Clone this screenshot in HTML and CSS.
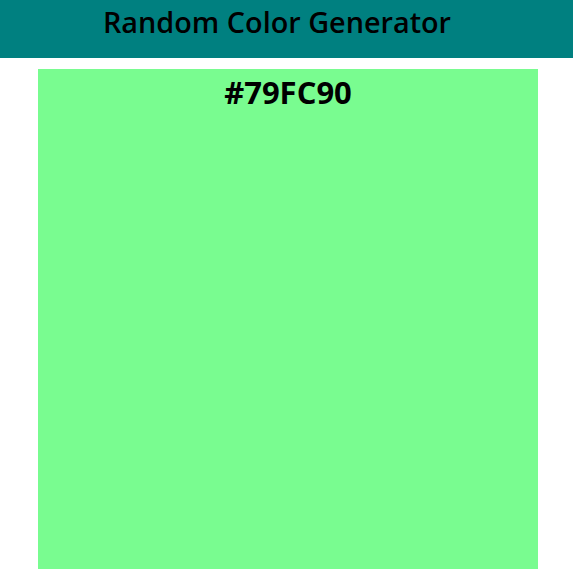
FILE: index.html
```html
<!DOCTYPE html>
<html>
<head>
<meta charset="utf-8">
<link rel="stylesheet" href="styles.css">
</head>
<body>
<header class="top">
  <h1 class="title">Random Color Generator</h1>
</header>
<main class="stage">
  <div class="swatch" style="background:#79FC90">
    <h2 class="code">#79FC90</h2>
  </div>
</main>
</body>
</html>
```
FILE: styles.css
```css
html, body {
  margin: 0;
  padding: 0;
  background: #fff;
}
body {
  font-family: "Open Sans", sans-serif;
}
.top {
  background: #008080;
  height: 58px;
  display: flex;
  justify-content: center;
  padding-right: 19px;
}
.title {
  margin: 0;
  font-size: 28.8px;
  line-height: 44px;
  font-weight: 600;
  color: #000;
}
.stage {
  padding: 11px 0 0 38px;
}
.swatch {
  width: 500px;
  height: 500px;
  display: flex;
  justify-content: center;
}
.code {
  margin: 0;
  font-size: 31px;
  line-height: 46px;
  font-weight: bold;
  color: #000;
}
```
